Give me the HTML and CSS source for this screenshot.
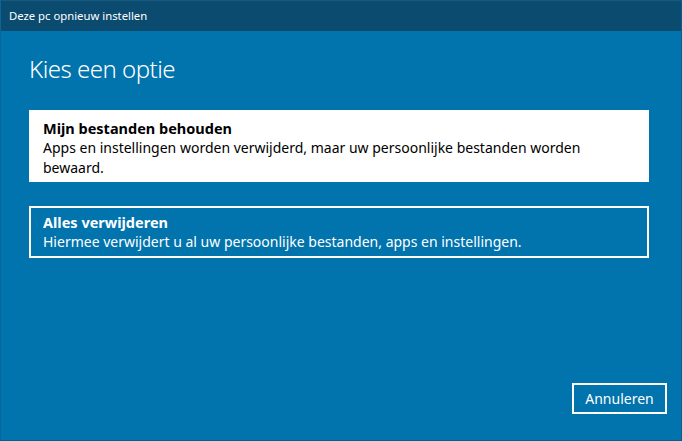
FILE: index.html
```html
<!DOCTYPE html>
<html lang="nl">
<head>
<meta charset="utf-8">
<title>Deze pc opnieuw instellen</title>
<link rel="stylesheet" href="styles.css">
</head>
<body>
<div class="window">
  <div class="titlebar">Deze pc opnieuw instellen</div>
  <div class="content">
    <h1 class="heading">Kies een optie</h1>
    <div class="options">
      <div class="option option-selected">
        <div class="option-title">Mijn bestanden behouden</div>
        <div class="option-desc">Apps en instellingen worden verwijderd, maar uw persoonlijke bestanden worden bewaard.</div>
      </div>
      <div class="option option-outline">
        <div class="option-title">Alles verwijderen</div>
        <div class="option-desc">Hiermee verwijdert u al uw persoonlijke bestanden, apps en instellingen.</div>
      </div>
    </div>
    <div class="footer">
      <button class="btn">Annuleren</button>
    </div>
  </div>
</div>
</body>
</html>
```
FILE: styles.css
```css
html, body {
  margin: 0;
  padding: 0;
}
body {
  width: 682px;
  height: 441px;
  overflow: hidden;
  font-family: "Noto Sans", "Open Sans", "Liberation Sans", sans-serif;
  background: #0173ad;
}
.window {
  box-sizing: border-box;
  height: 441px;
  display: flex;
  flex-direction: column;
  background: #0173ad;
  border-left: 1px solid #0a669a;
  border-right: 1px solid #0a5c8a;
  border-bottom: 1px solid #0a5c8a;
}
.titlebar {
  height: 31px;
  line-height: 30px;
  padding-left: 8px;
  background: #0b4b6f;
  color: #ffffff;
  font-size: 11.3px;
  border-top: 1px solid #165a80;
  box-sizing: border-box;
}
.content {
  flex: 1;
  display: flex;
  flex-direction: column;
  padding: 0 14px 26px 28px;
  color: #ffffff;
}
.heading {
  margin: 22px 0 0 0;
  font-size: 24px;
  line-height: 32px;
  font-weight: 300;
  letter-spacing: -0.5px;
}
.options {
  margin-top: 25px;
  padding-right: 18px;
  display: flex;
  flex-direction: column;
  gap: 24px;
}
.option {
  box-sizing: border-box;
  font-size: 14px;
  line-height: 20px;
}
.option-selected {
  background: #ffffff;
  color: #000000;
  padding: 8px 40px 4px 14px;
}
.option-outline {
  border: 2px solid #ffffff;
  padding: 4px 40px 4px 12px;
  color: #ffffff;
}
.option-title {
  font-weight: 700;
  font-size: 14.5px;
}
.footer {
  margin-top: auto;
  display: flex;
  justify-content: flex-end;
}
.btn {
  box-sizing: border-box;
  width: 95px;
  height: 31px;
  background: transparent;
  border: 2px solid #ffffff;
  color: #ffffff;
  font-family: inherit;
  font-size: 14px;
  padding: 0;
  line-height: 27px;
}
```
